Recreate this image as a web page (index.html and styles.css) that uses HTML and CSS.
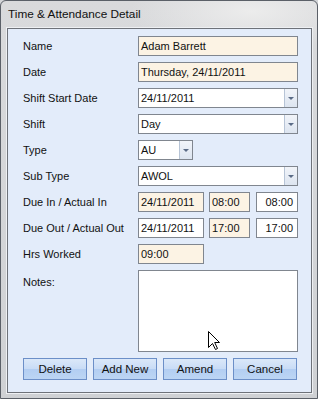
FILE: index.html
```html
<!DOCTYPE html>
<html lang="en">
<head>
  <meta charset="UTF-8" />
  <title>Time &amp; Attendance Detail</title>
  <link rel="stylesheet" href="styles.css">
</head>
<body>
  <div class="window">
    <div class="titlebar">Time &amp; Attendance Detail</div>

    <div class="panel">
      <div class="form">
        <div class="label">Name</div>
        <div class="field readonly">Adam Barrett</div>

        <div class="label">Date</div>
        <div class="field readonly">Thursday, 24/11/2011</div>

        <div class="label">Shift Start Date</div>
        <div class="field combo">
          <span class="value">24/11/2011</span>
          <span class="drop"></span>
        </div>

        <div class="label">Shift</div>
        <div class="field combo">
          <span class="value">Day</span>
          <span class="drop"></span>
        </div>

        <div class="label">Type</div>
        <div class="field combo short">
          <span class="value">AU</span>
          <span class="drop"></span>
        </div>

        <div class="label">Sub Type</div>
        <div class="field combo">
          <span class="value">AWOL</span>
          <span class="drop"></span>
        </div>

        <div class="label">Due In / Actual In</div>
        <div class="triple">
          <div class="field date readonly">24/11/2011</div>
          <div class="field time readonly">08:00</div>
          <div class="field actual">08:00</div>
        </div>

        <div class="label">Due Out / Actual Out</div>
        <div class="triple">
          <div class="field date">24/11/2011</div>
          <div class="field time readonly">17:00</div>
          <div class="field actual">17:00</div>
        </div>

        <div class="label">Hrs Worked</div>
        <div class="field date readonly">09:00</div>

        <div class="label notes-label">Notes:</div>
        <div class="field notes"></div>
      </div>

      <div class="buttons">
        <div class="btn">Delete</div>
        <div class="btn">Add New</div>
        <div class="btn">Amend</div>
        <div class="btn">Cancel</div>
      </div>
    </div>

    <!-- mouse pointer resting over the notes box -->
    <svg class="cursor" width="13" height="20" viewBox="0 0 13 20">
      <path d="M0.5 0.5 L0.5 16.5 L4.5 12.5 L7.5 18.5 L9.5 17.5 L6.7 11.5 L11.5 11.5 Z" fill="#fff" stroke="#000" stroke-width="1" />
    </svg>
  </div>
</body>
</html>
```

FILE: styles.css
```css
body {
  margin: 0;
  font-family: "Liberation Sans", Arial, sans-serif;
  font-size: 11px;
  color: #111;
  background-color: #d3d5d8;
}
.window {
  position: relative;
  width: 318px;
  height: 399px;
  box-sizing: border-box;
  border: 1px solid #5b6068;
  border-radius: 6px 6px 0 0;
  background: radial-gradient(ellipse 120px 40px at 250px 10px, #ececec, rgba(236,236,236,0) 100%), linear-gradient(#d9dadc, #cfd1d4);
  overflow: hidden;
}
.titlebar {
  height: 27px;
  line-height: 27px;
  padding-left: 7px;
  font-size: 11.8px;
}
.panel {
  margin-left: 6px;
  width: 305px;
  height: 365px;
  box-sizing: border-box;
  border: 1px solid #6e7279;
  box-shadow: 0 0 0 1px #eef0f3;
  background-color: #e3ecfa;
  padding: 7px 13px 0 15px;
}
.form {
  display: grid;
  grid-template-columns: 115px 160px;
  grid-template-rows: repeat(9, 20px) 82px;
  row-gap: 6px;
}
.label {
  display: flex;
  align-items: center;
  white-space: nowrap;
}
.notes-label {
  align-items: flex-start;
  padding-top: 6px;
}
.field {
  box-sizing: border-box;
  height: 20px;
  border: 1px solid #80868f;
  background-color: #fff;
  padding: 0 2px;
  line-height: 18px;
  white-space: nowrap;
}
.field.readonly {
  background-color: #fcf3e4;
}
.field.notes {
  height: 82px;
}
.combo {
  display: flex;
  padding: 0 0 0 2px;
}
.combo .value {
  flex: 1;
}
.combo.short {
  width: 55px;
}
.drop {
  width: 12px;
  border-left: 1px solid #b7c4d6;
  background: linear-gradient(#f1f4f9, #dde5f0);
  position: relative;
}
.drop::after {
  content: "";
  position: absolute;
  left: 3px;
  top: 8px;
  border-left: 3px solid transparent;
  border-right: 3px solid transparent;
  border-top: 3px solid #5a6b86;
}
.triple {
  display: flex;
}
.field.date {
  width: 66px;
}
.field.time {
  width: 41px;
  margin-left: 5px;
}
.field.actual {
  width: 42px;
  margin-left: 6px;
  text-align: right;
  padding-right: 4px;
}
.buttons {
  display: flex;
  gap: 6px;
  margin-top: 6px;
}
.btn {
  width: 64px;
  height: 22px;
  box-sizing: border-box;
  border: 1px solid #6c8fc8;
  background: linear-gradient(#dbe8f9 0%, #c9dcf6 48%, #b3cef2 52%, #bcd5f4 100%);
  text-align: center;
  line-height: 20px;
  font-size: 11.5px;
}
.cursor {
  position: absolute;
  left: 207px;
  top: 330px;
}
```
